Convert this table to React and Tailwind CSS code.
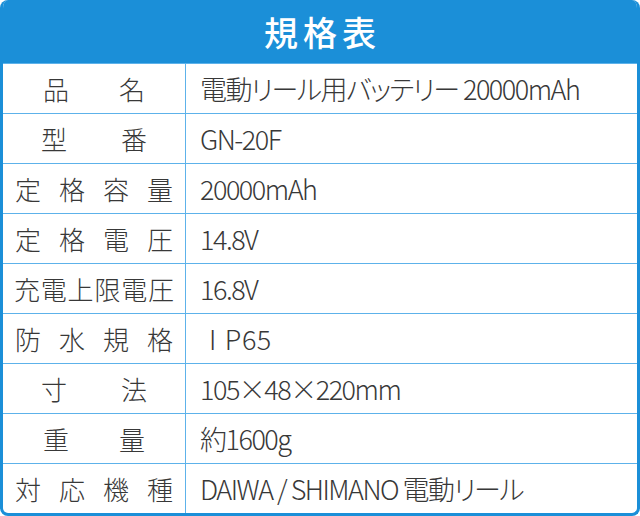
const rows = [
  { label: ['品', '名'], pad: 'px-[40px]', value: '電動リール用バッテリー 20000mAh' },
  { label: ['型', '番'], pad: 'px-[38px]', value: 'GN-20F' },
  { label: ['定', '格', '容', '量'], pad: 'px-[12px]', value: '20000mAh' },
  { label: ['定', '格', '電', '圧'], pad: 'px-[12px]', value: '14.8V' },
  { label: ['充', '電', '上', '限', '電', '圧'], pad: 'px-[11px]', value: '16.8V' },
  { label: ['防', '水', '規', '格'], pad: 'px-[12px]', value: null },
  { label: ['寸', '法'], pad: 'px-[38px]', value: '105×48×220mm' },
  { label: ['重', '量'], pad: 'px-[40px]', value: '約1600g' },
  { label: ['対', '応', '機', '種'], pad: 'px-[12px]', value: 'DAIWA / SHIMANO 電動リール' },
]

export default function App() {
  return (
    <div className="w-[640px] h-[516px] bg-white overflow-hidden font-['Noto_Sans_CJK_JP',sans-serif] text-[#383838]">
      <div className="h-full flex flex-col rounded-[8px] border-[3px] border-t-0 border-[#1b8fd8] overflow-hidden">
        {/* Title */}
        <div className="h-[63px] shrink-0 bg-[#1b8fd8] flex items-center justify-center">
          <span className="text-white text-[34px] font-medium tracking-[5px] pl-[5px] leading-none">規格表</span>
        </div>

        {rows.map((r, i) => (
          <div key={i} className="h-[50px] shrink-0 flex border-t-[1.5px] border-[#5db2ea]">
            <div className={`w-[183px] shrink-0 flex items-center justify-between ${r.pad} text-[26px] leading-none font-light border-r-[1.5px] border-[#5db2ea]`}>
              {r.label.map((c, j) => (
                <span key={j}>{c}</span>
              ))}
            </div>
            <div className="flex-1 flex items-center pl-[14px] text-[27px] leading-none font-light tracking-[-1.5px] [font-feature-settings:'palt']">
              {r.value ?? (
                <span className="pl-[9px] tracking-[0.5px]">
                  <span className="mr-[8px]">I</span>P65
                </span>
              )}
            </div>
          </div>
        ))}
      </div>
    </div>
  )
}
